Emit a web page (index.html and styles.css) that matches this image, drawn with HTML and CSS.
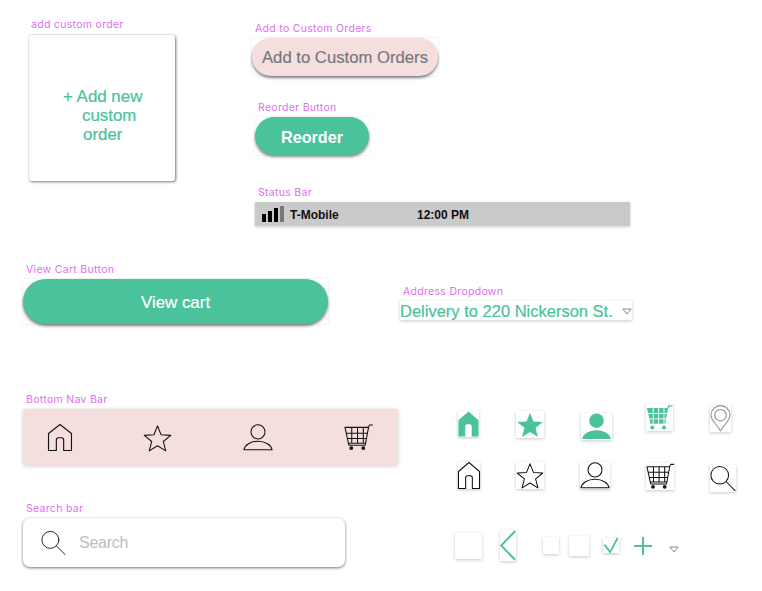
FILE: index.html
```html
<!DOCTYPE html>
<html lang="en">
<head>
<meta charset="utf-8">
<title>UI components</title>
<link rel="stylesheet" href="styles.css">
</head>
<body>
<svg class="sprite" aria-hidden="true">
  <symbol id="home" viewBox="0.5 0.500 23 25.500" preserveAspectRatio="none"><path d="M1 25.500V9.500L12 1l11 8.500V25.500H15.500V15.500a2 2 0 0 0-2-2h-3a2 2 0 0 0-2 2V25.500Z"/></symbol>
  <symbol id="star" viewBox="0 0 30 28"><path d="M15 1.500l3.700 9.200 10 .6-7.700 6.300 2.500 9.700L15 22l-8.500 5.300 2.500-9.700-7.700-6.300 10-.6Z"/></symbol>
  <symbol id="user" viewBox="0 0 32 28"><circle cx="16" cy="8" r="7.500"/><path d="M1 27c1-5 7-9 15-9s14 4 15 9Z"/></symbol>
  <symbol id="cart" viewBox="0 0 30 28"><path d="M1 3.500H25M2.500 9.500H24M4 15H23M5 20H22M8 3.500V20M14 3.500V20M20 3.500V20M1 3.500L5 22H22L25.500 3 26.500 1H29.500"/><circle class="wheel" cx="7.500" cy="25" r="2"/><circle class="wheel" cx="20" cy="25" r="2"/></symbol>
  <symbol id="cartfill" viewBox="0 0 30 28"><path class="cartbody" d="M1 3.500H24.500L21.500 21H5Z"/><path class="cartgrid" d="M2.500 9.500H24M4 15.500H23M8 3.500V21M14 3.500V21M20 3.500V21"/><path class="cartarm" d="M24.500 3.500L25.500 1H29"/><circle class="wheelfill" cx="7" cy="25" r="2.200"/><circle class="wheelfill" cx="20" cy="25" r="2.200"/></symbol>
  <symbol id="search" viewBox="0 0 28 28"><circle cx="10.500" cy="10.500" r="9.500"/><path d="M17.500 17.500L27 27"/></symbol>
  <symbol id="pin" viewBox="0 0 22 28"><path d="M11 27C7 20 1 16 1 10.500a10 10 0 0 1 20 0C21 16 15 20 11 27Z"/><circle cx="11" cy="10.500" r="6"/></symbol>
  <symbol id="caret" viewBox="0 0 10 7"><path d="M.8 1H9.200L5 6Z"/></symbol>
</svg>

<main class="canvas">
  <p class="label label-custom">add custom order</p>
  <div class="custom-card">
    <p class="custom-text">+ Add new<br><span class="line-2">custom</span><br><span class="line-3">order</span></p>
  </div>

  <p class="label label-add">Add to Custom Orders</p>
  <div class="frame frame-add"><button class="pill pill-add">Add to Custom Orders</button></div>

  <p class="label label-reorder">Reorder Button</p>
  <div class="frame frame-reorder"><button class="pill pill-reorder">Reorder</button></div>

  <p class="label label-status">Status Bar</p>
  <div class="status-bar">
    <span class="signal"><i class="bar b1"></i><i class="bar b2"></i><i class="bar b3"></i><i class="bar b4"></i></span>
    <span class="carrier">T-Mobile</span>
    <span class="clock">12:00 PM</span>
  </div>

  <p class="label label-cart">View Cart Button</p>
  <div class="frame frame-cart"><button class="pill pill-cart">View cart</button></div>

  <p class="label label-address">Address Dropdown</p>
  <div class="address">
    <span>Delivery to 220 Nickerson St.</span>
    <svg class="caret"><use href="#caret"/></svg>
  </div>

  <p class="label label-nav">Bottom Nav Bar</p>
  <nav class="nav-bar">
    <svg class="ico nav-home"><use href="#home"/></svg>
    <svg class="ico nav-star"><use href="#star"/></svg>
    <svg class="ico nav-user"><use href="#user"/></svg>
    <svg class="ico nav-cart"><use href="#cart"/></svg>
  </nav>

  <p class="label label-search">Search bar</p>
  <div class="search-bar">
    <svg class="ico search-ico"><use href="#search"/></svg>
    <span class="search-text">Search</span>
  </div>

  <div class="tile t-home-g"><svg class="ico fill"><use href="#home"/></svg></div>
  <div class="tile t-star-g"><svg class="ico fill"><use href="#star"/></svg></div>
  <div class="tile t-user-g"><svg class="ico fill"><use href="#user"/></svg></div>
  <div class="tile t-cart-g"><svg class="ico"><use href="#cartfill"/></svg></div>
  <div class="tile t-pin"><svg class="ico pin"><use href="#pin"/></svg></div>

  <div class="tile t-home"><svg class="ico"><use href="#home"/></svg></div>
  <div class="tile t-star"><svg class="ico"><use href="#star"/></svg></div>
  <div class="tile t-user"><svg class="ico"><use href="#user"/></svg></div>
  <div class="tile t-cart"><svg class="ico"><use href="#cart"/></svg></div>
  <div class="tile t-search"><svg class="ico"><use href="#search"/></svg></div>

  <div class="tile t-blank1"></div>
  <div class="tile t-back"><svg class="ico green-line" viewBox="0 0 16 32"><path d="M15.500 1L1 16l14.500 15"/></svg></div>
  <div class="tile t-blank2"></div>
  <div class="tile t-blank3"></div>
  <div class="tile t-check"><svg class="ico green-line" viewBox="0 0 17 17"><path d="M1 7.500L7.500 16 16 0"/></svg></div>
  <svg class="ico green-line t-plus" viewBox="0 0 18 18"><path d="M9 0V18M0 9H18"/></svg>
  <svg class="caret t-caret"><use href="#caret"/></svg>
</main>
</body>
</html>
```
FILE: styles.css
```css
* { box-sizing: border-box; }
html, body { margin: 0; padding: 0; background: #fff; }
body { width: 762px; height: 591px; overflow: hidden; font-family: "Liberation Sans", Arial, sans-serif; }
.sprite { position: absolute; width: 0; height: 0; }
symbol { overflow: visible; }

/* Free design canvas: every specimen's place on the sheet is the content. */
.canvas { position: relative; width: 762px; height: 591px; }
.canvas > * { position: absolute; margin: 0; }

.label { font: 10.5px/14px Inter, "Liberation Sans", sans-serif; letter-spacing: .3px; color: #de6ff0; white-space: nowrap; }
.label-custom { left: 31px; top: 18px; }
.label-add { left: 255px; top: 22px; }
.label-reorder { left: 258px; top: 101px; }
.label-status { left: 258px; top: 186px; }
.label-cart { left: 26px; top: 263px; }
.label-address { left: 403px; top: 285px; }
.label-nav { left: 26px; top: 393px; }
.label-search { left: 26px; top: 502px; }

.custom-card { left: 29px; top: 35px; width: 146px; height: 146px; background: #fff; border-radius: 3px; box-shadow: 1px 1px 3px rgba(0,0,0,.5), 0 0 2px rgba(0,0,0,.18); }
.custom-text { position: absolute; left: 34px; top: 52px; margin: 0; font-size: 16.9px; line-height: 19px; color: #4ac29b; white-space: nowrap; -webkit-text-stroke: .2px #4ac29b; }
.line-2 { margin-left: 19px; }
.line-3 { margin-left: 20px; }

.frame { background: #fff; box-shadow: 0 0 2px rgba(0,0,0,.12); display: flex; }
.pill { flex: 1; border: 0; padding: 2px 0 0; border-radius: 19px; font-family: "Liberation Sans", Arial, sans-serif; }
.frame-add { left: 252px; top: 38px; width: 186px; height: 38px; }
.pill-add { background: #f5dfde; color: #77787d; font-size: 16.7px; box-shadow: 0 2px 3px rgba(0,0,0,.5); -webkit-text-stroke: .2px #77787d; }
.frame-reorder { left: 255px; top: 117px; width: 114px; height: 38px; }
.pill-reorder { background: #4ac29b; color: #fff; font-size: 16.2px; font-weight: 700; box-shadow: 0 2px 3px rgba(0,0,0,.45); }
.frame-cart { left: 23px; top: 279px; width: 305px; height: 45px; }
.pill-cart { background: #4ac29b; color: #fff; font-size: 16.9px; border-radius: 23px; box-shadow: 0 2px 3px rgba(0,0,0,.5); -webkit-text-stroke: .2px #fff; }

.status-bar { left: 255px; top: 202px; width: 375px; height: 24px; padding-top: 2px; background: #cacaca; box-shadow: 0 1px 3px rgba(0,0,0,.2); display: flex; align-items: center; padding-left: 7px; font-size: 12px; font-weight: 700; color: #111; }
.signal { display: flex; align-items: flex-end; gap: 2px; height: 16px; width: 22px; margin-top: -2px; }
.bar { display: block; width: 4px; background: #000; }
.b1 { height: 8px; } .b2 { height: 11px; } .b3 { height: 14px; } .b4 { height: 16px; background: #77787d; }
.carrier { margin-left: 6px; width: 127px; }

.address { left: 400px; top: 301px; width: 232px; height: 19px; padding-top: 2px; background: #fff; box-shadow: 0 1px 3px rgba(0,0,0,.22); display: flex; align-items: center; justify-content: space-between; font-size: 16.5px; color: #4ac29b; white-space: nowrap; -webkit-text-stroke: .2px #4ac29b; }
.caret { width: 10px; height: 7px; fill: #fff; stroke: #8a8a8a; stroke-width: 1; -webkit-text-stroke: 0; }

.ico { display: block; fill: none; stroke: #111; stroke-width: 1.100; stroke-linejoin: round; stroke-linecap: round; overflow: visible; }
.wheel { fill: #111; stroke: none; }
.ico.fill { fill: #4ac29b; stroke: none; }
.cartbody { fill: #4ac29b; stroke: none; }
.cartgrid { stroke: #fff; stroke-width: 1; fill: none; }
.cartarm { stroke: #4ac29b; fill: none; stroke-width: 1.500; }
.wheelfill { fill: #4ac29b; stroke: none; }
.ico.pin { stroke: #8f8f8f; }
.ico.green-line { stroke: #4ac29b; stroke-width: 2; stroke-linecap: butt; stroke-linejoin: miter; }

.nav-bar { left: 23px; top: 409px; width: 375px; height: 56px; background: #f5dfde; border-radius: 3px; box-shadow: 0 1px 4px rgba(0,0,0,.2); }
.nav-bar .ico { position: absolute; }
.nav-home { left: 25px; top: 15px; width: 24px; height: 27px; }
.nav-star { left: 120px; top: 15px; width: 29px; height: 28px; }
.nav-user { left: 220px; top: 15px; width: 30px; height: 27px; }
.nav-cart { left: 321px; top: 15px; width: 29px; height: 27px; }

.search-bar { left: 23px; top: 518px; width: 322px; height: 49px; background: #fff; border-radius: 7px; box-shadow: 0 1px 3px rgba(0,0,0,.55), 0 0 1px rgba(0,0,0,.1); display: flex; align-items: center; padding-left: 18px; }
.search-ico { width: 25px; height: 26px; stroke-width: 1; }
.search-text { margin-left: 13px; font-size: 16px; letter-spacing: -.25px; color: #bdbdbd; }

.tile { background: #fff; box-shadow: 0 1px 3px rgba(0,0,0,.22); }
.tile .ico { position: absolute; inset: 0; width: 100%; height: 100%; }
.t-home-g { left: 458px; top: 411px; width: 21px; height: 26px; }
.t-star-g { left: 516px; top: 411px; width: 28px; height: 27px; }
.t-user-g { left: 581px; top: 413px; width: 31px; height: 27px; }
.t-cart-g { left: 646px; top: 404px; width: 27px; height: 27px; }
.t-pin { left: 710px; top: 405px; width: 21px; height: 27px; }
.t-home { left: 458px; top: 462px; width: 22px; height: 27px; }
.t-star { left: 516px; top: 462px; width: 28px; height: 27px; }
.t-user { left: 580px; top: 462px; width: 30px; height: 27px; }
.t-cart { left: 646px; top: 463px; width: 28px; height: 27px; }
.t-search { left: 710px; top: 465px; width: 26px; height: 27px; }
.t-blank1 { left: 455px; top: 533px; width: 27px; height: 26px; }
.t-back { left: 500px; top: 530px; width: 16px; height: 31px; }
.t-blank2 { left: 543px; top: 537px; width: 16px; height: 17px; }
.t-blank3 { left: 569px; top: 536px; width: 20px; height: 20px; }
.t-check { left: 603px; top: 538px; width: 16px; height: 15px; box-shadow: 0 1px 3px rgba(0,0,0,.25); }
.t-plus { left: 634px; top: 537px; width: 18px; height: 18px; }
.t-caret { left: 669px; top: 546px; }
```
